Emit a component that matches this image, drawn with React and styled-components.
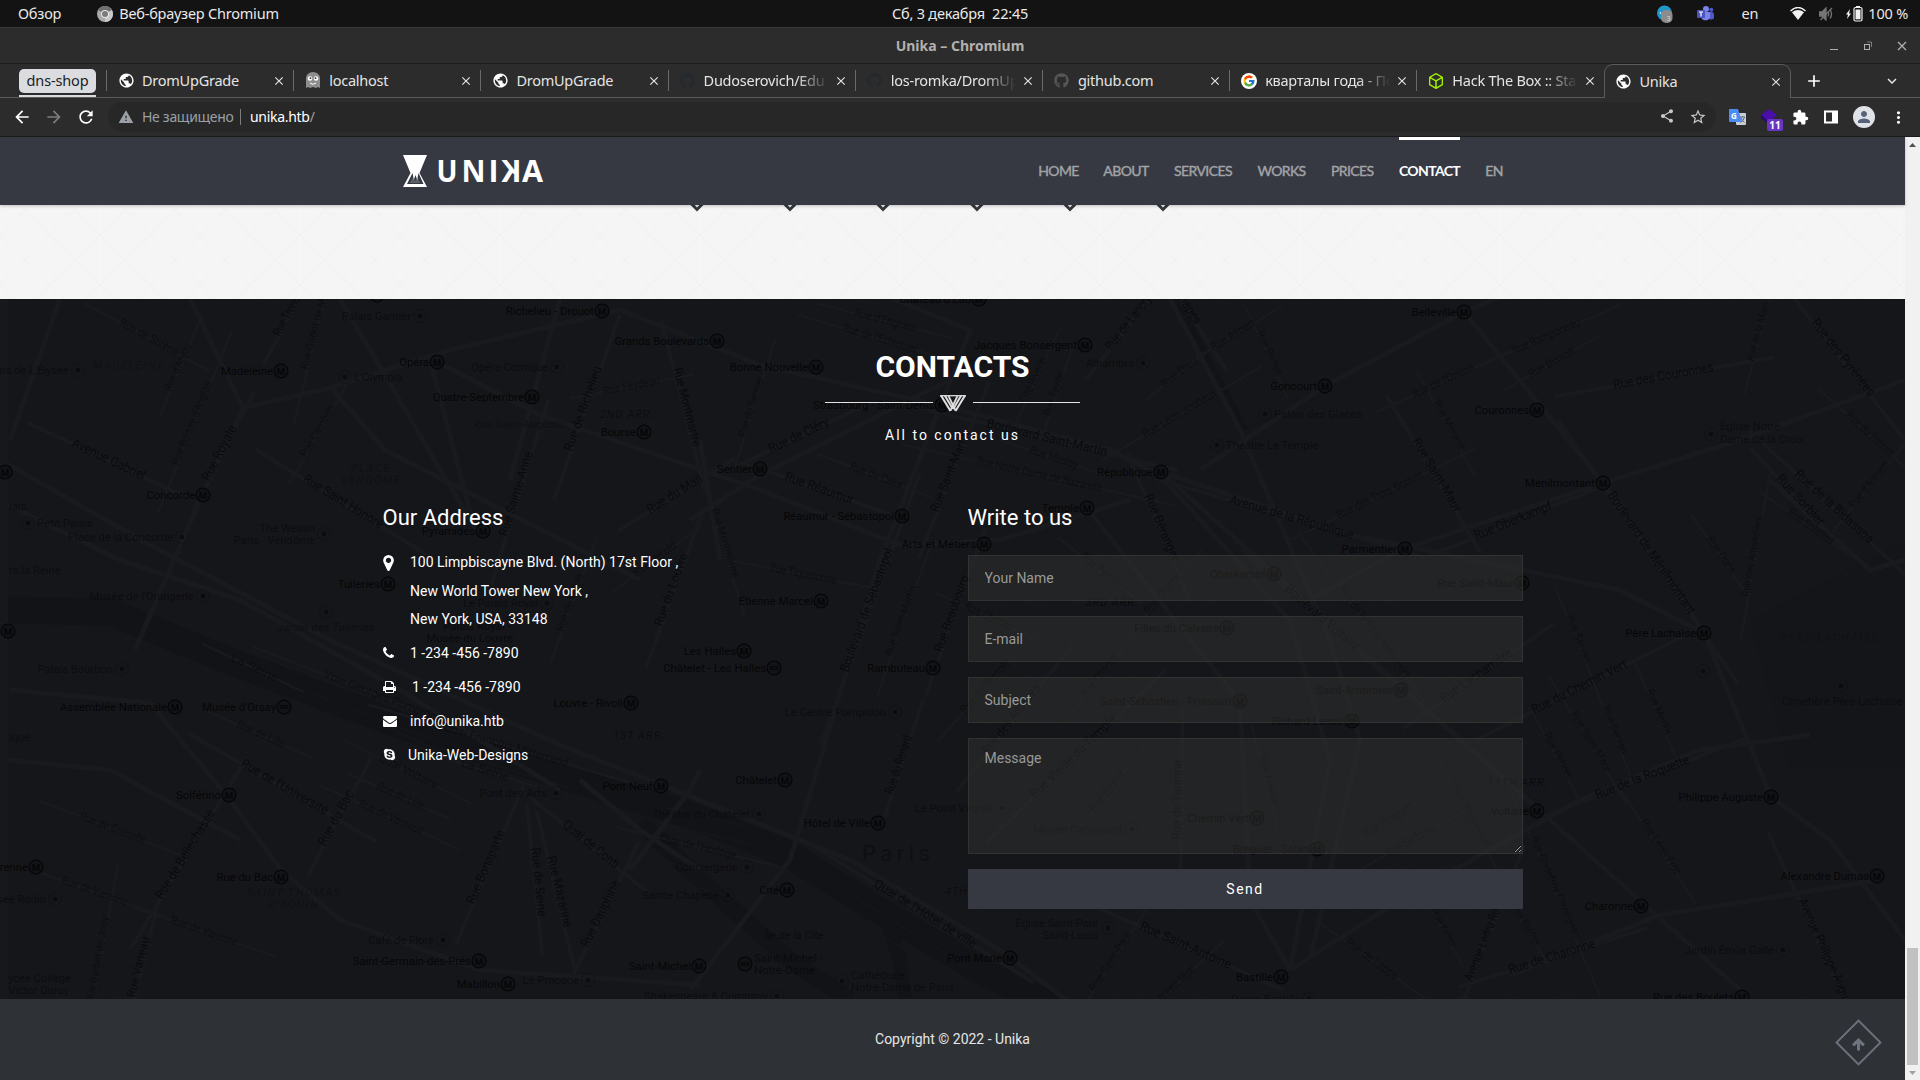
import React from "react";
import styled, { createGlobalStyle, css } from "styled-components";
import {
  MdPublic, MdExtension, MdShare, MdStarBorder, MdWarning, MdArrowBack, MdArrowForward,
  MdRefresh, MdClose, MdAdd, MdMoreVert, MdPerson, MdKeyboardArrowDown,
} from "react-icons/md";
import { FaGithub, FaSkype, FaArrowUp } from "react-icons/fa";
import { FcGoogle } from "react-icons/fc";
import { SiHackthebox } from "react-icons/si";

const UI = `"Noto Sans", "Open Sans", sans-serif`;
const BODY = `Roboto, "Liberation Sans", sans-serif`;

const GlobalStyle = createGlobalStyle`
  *, *::before, *::after { box-sizing: border-box; }
  body { margin: 0; background: #2b2b2b; overflow: hidden; font-family: ${BODY}; }
  svg { display: block; flex: none; }
`;

/* ---------- desktop and browser frame ---------- */

const Screen = styled.div`
  width: 1920px;
  height: 1080px;
  display: flex;
  flex-direction: column;
  overflow: hidden;
`;

const SystemBar = styled.header`
  height: 27px;
  flex: none;
  display: grid;
  grid-template-columns: 1fr auto 1fr;
  align-items: center;
  background: #131313;
  color: #e9e9e9;
  font: 14.5px/27px ${UI};
  letter-spacing: -0.2px;
  white-space: pre;
`;

const SystemLeft = styled.div`
  display: flex;
  align-items: center;
  padding-left: 18px;
`;

const SystemApp = styled.span`
  display: flex;
  align-items: center;
  gap: 6px;
  margin-left: 36px;
`;

const SystemRight = styled.div`
  display: flex;
  align-items: center;
  justify-content: flex-end;
  padding-right: 12px;
`;

const TrayItem = styled.span`
  display: flex;
  align-items: center;
  margin-left: ${(p) => p.$gap}px;
`;

const TitleBar = styled.div`
  height: 37px;
  flex: none;
  display: grid;
  grid-template-columns: 1fr auto 1fr;
  align-items: center;
  background: #2c2c2c;
  border-top: 1px solid #3b3b3b;
  border-bottom: 1px solid #1d1d1d;
  color: #b3b1ae;
  font: bold 14px/35px ${UI};
  letter-spacing: 0;
`;

const WindowButtons = styled.div`
  grid-column: 3;
  display: flex;
  justify-content: flex-end;
  align-items: center;
  gap: 24px;
  padding-right: 13px;
`;

const TabStrip = styled.div`
  height: 34px;
  flex: none;
  display: flex;
  background: #2c2c2c;
  color: #e4e4e4;
  font: 14.5px/28px ${UI};
  letter-spacing: -0.25px;
`;

const StripCell = styled.div`
  display: flex;
  align-items: center;
  border-bottom: 1px solid #5b5b5b;
  ${(p) => p.$grow && css`flex: 1; justify-content: space-between; padding: 0 19px 0 13px;`}
`;

const GroupCell = styled(StripCell)`
  width: 106px;
  padding-left: 19px;
  align-items: flex-start;
`;

const GroupChip = styled.div`
  width: 77px;
  height: 33px;
  padding-top: 5px;
  border-bottom: 2px solid #dadce0;
`;

const ChipLabel = styled.div`
  height: 24px;
  border-radius: 5px;
  background: #dadce0;
  color: #202124;
  text-align: center;
  line-height: 22px;
  letter-spacing: -0.15px;
`;

const Tab = styled(StripCell)`
  width: 187.2px;
  padding: 0 7px 0 0;

  &::before {
    content: "";
    width: 1px;
    height: 21px;
    background: #6a6a6a;
    margin-right: 11px;
  }

  ${(p) =>
    p.$active &&
    css`
      border: 1px solid #5b5b5b;
      border-bottom: 0;
      border-radius: 9px 9px 0 0;
      &::before { background: transparent; margin-right: 10px; }
    `}
`;

const TabIcon = styled.span`
  width: 16px;
  display: flex;
  justify-content: center;
`;

const TabTitle = styled.span`
  flex: 1;
  margin: 0 5px 0 8px;
  padding-bottom: 2px;
  overflow: hidden;
  white-space: nowrap;
  ${(p) =>
    p.$fade &&
    css`
      -webkit-mask-image: linear-gradient(90deg, #000 74%, transparent 100%);
      mask-image: linear-gradient(90deg, #000 74%, transparent 100%);
    `}
`;

const Toolbar = styled.div`
  height: 39px;
  flex: none;
  display: flex;
  align-items: center;
  background: #2c2c2c;
  border-bottom: 1px solid #1b1b1b;
  padding: 0 12px;
  font: 14px/30px ${UI};
  color: #fff;
`;

const NavButtons = styled.div`
  display: flex;
  gap: 12px;
  width: 96px;
`;

const Omnibox = styled.div`
  width: 1608px;
  height: 30px;
  border-radius: 15px;
  background: #272727;
  display: flex;
  align-items: center;
  padding: 0 9px 0 10px;
  letter-spacing: -0.3px;
`;

const Security = styled.span`
  display: flex;
  align-items: center;
  gap: 8px;
  width: 122px;
  color: #9aa0a6;
  white-space: nowrap;
`;

const Separator = styled.span`
  width: 1px;
  height: 16px;
  margin-right: 9px;
  background: #7c7c7c;
`;

const Url = styled.span`
  flex: 1;
  i { color: #9aa0a6; font-style: normal; }
`;

const OmniActions = styled.span`
  display: flex;
  gap: 14px;
  color: #c8c8c8;
`;

const Extensions = styled.div`
  flex: 1;
  display: flex;
  align-items: center;
  justify-content: space-between;
  padding: 0 0 0 13px;
`;

const BadgeIcon = styled.span`
  position: relative;
  width: 18px;
  height: 20px;
`;

const Badge = styled.span`
  position: absolute;
  left: 7px;
  top: 12px;
  width: 16px;
  height: 12px;
  border-radius: 2px;
  background: #6a35c0;
  color: #fff;
  font: bold 10px/12px ${UI};
  text-align: center;
`;

const Avatar = styled.span`
  width: 22px;
  height: 22px;
  border-radius: 50%;
  background: #dfe2e7;
  color: #56617a;
  display: flex;
  align-items: center;
  justify-content: center;
`;

/* ---------- page ---------- */

const Viewport = styled.div`
  flex: 1;
  min-height: 0;
  display: grid;
  grid-template-columns: 1905px 15px;
`;

const Page = styled.main`
  display: flex;
  flex-direction: column;
  min-width: 0;
`;

const ScrollTrack = styled.div`
  background: #f1f1f1;
  display: flex;
  flex-direction: column;
  align-items: center;
  justify-content: space-between;
  padding: 6px 0 5px;
`;

const ScrollThumb = styled.div`
  width: 11px;
  height: 117px;
  margin-top: auto;
  margin-bottom: 6px;
  background: #c1c1c1;
`;

const NavBar = styled.nav`
  height: 68px;
  flex: none;
  display: flex;
  justify-content: space-between;
  padding: 0 402px 0 403px;
  background: #363942;
  box-shadow: 0 1px 3px rgba(0, 0, 0, 0.22);
  z-index: 2;
`;

const Logo = styled.div`
  padding-top: 16px;
`;

const Menu = styled.ul`
  display: flex;
  gap: 25px;
  margin: 0;
  padding: 0;
  list-style: none;
`;

const MenuItem = styled.li`
  width: ${(p) => p.$width}px;
  display: flex;
  justify-content: center;
  border-top: 3px solid ${(p) => (p.$active ? "#fff" : "transparent")};
  color: ${(p) => (p.$active ? "#fff" : "#a2a3a7")};
  font: ${(p) => (p.$active ? 700 : 400)} 14px/62px Lato, sans-serif;
  letter-spacing: ${(p) => (p.$active ? -0.65 : -0.6)}px;
  -webkit-text-stroke: ${(p) => (p.$active ? 0 : 0.4)}px currentColor;
`;

const Stripes = styled.section`
  height: 94px;
  flex: none;
  position: relative;
  background: #f5f5f5;
`;

const ArrowRow = styled.div`
  position: relative;
  display: flex;
  gap: 79.4px;
  padding-left: 689.5px;
`;

const Backdrop = styled.svg`
  position: absolute;
  inset: 0;
`;

const Contacts = styled.section`
  height: 700px;
  flex: none;
  position: relative;
  background: #15161a;
  color: #fff;
`;

const Container = styled.div`
  position: relative;
  width: 1140px;
  margin: 0 auto;
  padding-top: 49px;
`;

const Heading = styled.h2`
  margin: 0;
  text-align: center;
  font: bold 30px/37px ${BODY};
`;

const Divider = styled.div`
  display: flex;
  justify-content: center;
  align-items: center;
  gap: 7px;
  height: 18px;
  margin-top: 9px;
`;

const Rule = styled.span`
  width: 107.5px;
  height: 1px;
  background: #e4e4e4;
  margin-top: -2px;
`;

const Lead = styled.p`
  margin: 13px 0 0;
  text-align: center;
  font: 14px/20px ${BODY};
  letter-spacing: 2px;
`;

const Columns = styled.div`
  display: grid;
  grid-template-columns: 555px 555px;
  gap: 30px;
  margin-top: 58px;
`;

const ColumnTitle = styled.h3`
  margin: 0;
  font: 400 22px/30px ${BODY};
`;

const AddressList = styled.ul`
  list-style: none;
  margin: 15px 0 0;
  padding: 0;
  display: flex;
  flex-direction: column;
  gap: 5.5px;
  font: 14px/28.5px ${BODY};
`;

const AddressItem = styled.li`
  display: grid;
  grid-template-columns: ${(p) => p.$indent}px 1fr;
  svg { margin-top: 7px; }
`;

const Form = styled.form`
  display: flex;
  flex-direction: column;
  gap: 15px;
  margin-top: 22px;
`;

const fieldStyle = css`
  width: 100%;
  margin: 0;
  border: 1px solid rgba(74, 74, 70, 0.38);
  border-radius: 0;
  outline: 0;
  background: rgba(50, 50, 48, 0.5);
  color: #fff;
  font: 14px/20px ${BODY};
  &::placeholder { color: #999; opacity: 1; }
`;

const Field = styled.input`
  ${fieldStyle}
  height: 46px;
  padding: 0 16px;
`;

const MessageField = styled.textarea`
  ${fieldStyle}
  display: block;
  height: 116px;
  padding: 9px 16px;
`;

const SendButton = styled.button`
  height: 40px;
  border: 0;
  padding: 0;
  background: #363942;
  color: #fff;
  font: 14px/40px ${BODY};
  letter-spacing: 1.5px;
`;

const Footer = styled.footer`
  flex: 1;
  display: grid;
  grid-template-columns: 1fr auto 1fr;
  align-items: center;
  background: #2e3135;
  color: #e6e6e6;
  font: 14px/20px ${BODY};
`;

const Copyright = styled.span`
  padding-bottom: 2px;
`;

const ToTop = styled.a`
  grid-column: 3;
  justify-self: end;
  width: 33px;
  height: 33px;
  margin: 6px 30px 0 0;
  border: 2px solid #6b717c;
  transform: rotate(45deg);
  display: flex;
  align-items: center;
  justify-content: center;
  color: #6f7580;
  svg { transform: rotate(-45deg) translateY(2px); stroke: currentColor; stroke-width: 40px; }
`;

/* ---------- map data: page coordinates ---------- */

const METRO = [
  [281, 371, "Madeleine"], [437, 362, "Opéra"], [532, 397, "Quatre-Septembre"], [602, 311, "Richelieu - Drouot"],
  [717, 341, "Grands Boulevards"], [816, 367, "Bonne Nouvelle"], [644, 432, "Bourse"], [760, 469, "Sentier"],
  [902, 516, "Réaumur - Sébastopol"], [483, 531, "Pyramides"], [388, 584, "Tuileries"], [203, 495, "Concorde"],
  [821, 601, "Étienne Marcel"], [744, 651, "Les Halles"], [774, 668, "Châtelet - Les Halles", 1], [933, 668, "Rambuteau"],
  [631, 703, "Louvre - Rivoli"], [785, 780, "Châtelet"], [984, 544, "Arts et Métiers"], [1087, 508, "Temple"],
  [1161, 472, "République"], [1085, 345, "Jacques Bonsergent"], [942, 405, "Strasbourg - Saint-Denis"],
  [979, 299, "Château d'Eau"], [1325, 386, "Goncourt"], [1464, 312, "Belleville"], [1537, 410, "Couronnes"],
  [1603, 483, "Ménilmontant"], [1704, 633, "Père Lachaise"], [1405, 549, "Parmentier"], [1522, 583, "Rue Saint-Maur"],
  [1274, 574, "Oberkampf"], [1227, 628, "Filles du Calvaire"], [1240, 701, "Saint-Sébastien - Froissart"],
  [1401, 690, "Saint-Ambroise"], [1352, 721, "Richard-Lenoir"], [1257, 818, "Chemin Vert"], [1317, 849, "Bréguet - Sabin"],
  [1537, 811, "Voltaire"], [1771, 797, "Philippe Auguste"], [1877, 876, "Alexandre Dumas"], [1641, 906, "Charonne"],
  [1742, 997, "Rue des Boulets"], [1281, 977, "Bastille"], [1010, 958, "Pont Marie"], [878, 823, "Hôtel de Ville"],
  [787, 890, "Cité"], [699, 966, "Saint-Michel"], [508, 984, "Mabillon"], [479, 961, "Saint-Germain-des-Prés"],
  [281, 877, "Rue du Bac"], [229, 795, "Solférino"], [175, 707, "Assemblée Nationale"], [284, 707, "Musée d'Orsay", 1],
  [36, 867, "Varenne"], [661, 786, "Pont Neuf"], [745, 964, "", 1], [5, 472, ""], [8, 631, ""], [377, 295, ""],
];

/* dot position, label, label on the right of the dot */
const PLACES = [
  [78, 370, "Palais de L'Élysée"], [420, 316, "Palais Garnier"], [345, 377, "L'Olympia", 1], [557, 367, "Opéra Comique"],
  [28, 523, "Petit Palais", 1], [182, 537, "Place de la Concorde"], [203, 596, "Musée de l'Orangerie"],
  [547, 603, "Le Palais Royal"], [895, 712, "Le Centre Pompidou"], [1143, 363, "Alhambra"],
  [1265, 414, "Palais des Glaces", 1], [1217, 445, "Théâtre Le Temple", 1], [122, 669, "Palais Bourbon"],
  [556, 793, "Pont des Arts"], [443, 940, "Café de Flore"], [588, 980, "Le Procope"], [55, 899, "Musée Rodin"],
  [759, 814, "Théâtre du Châtelet"], [747, 867, "Conciergerie"], [728, 895, "Sainte Chapelle"],
  [777, 996, "Shakespeare & Company"], [1002, 808, "Le Point Virgule"], [1132, 829, "Musée Carnavalet"],
  [1783, 950, "Jardin Émile Gallé"], [1309, 999, "Opéra Bastille"], [1703, 671, ""], [1841, 686, ""],
  [1711, 434, ""], [1108, 928, ""], [842, 981, ""], [324, 534, ""], [326, 612, ""],
];

/* free text: x, y, label, size, anchor, tone, spacing, italic */
const AREAS = [
  [129, 369, "MADELEINE", 11, "middle", 0.4, 1.6, 1], [371, 472, "PLACE", 11, "middle", 0.45, 1.6, 1],
  [371, 484, "VENDÔME", 11, "middle", 0.45, 1.6, 1], [627, 418, "2ND ARR.", 11, "middle", 0.7, 1, 1],
  [520, 428, "Rue Saint-Augustin", 11, "middle", 0.5, 0, 0], [639, 739, "1ST ARR.", 11, "middle", 0.7, 1, 1],
  [1112, 606, "3RD ARR.", 11, "middle", 0.9, 1, 1], [1518, 786, "11TH ARR.", 11, "middle", 0.8, 1, 1],
  [945, 895, "4TH", 11, "start", 0.7, 1, 1], [294, 896, "SAINT-THOMAS", 11, "middle", 0.4, 1.6, 1],
  [294, 908, "D'AQUIN", 11, "middle", 0.4, 1.6, 1], [1830, 641, "PÈRE-LACHAISE", 11, "middle", 0.4, 1.6, 1],
  [862, 861, "Paris", 22, "start", 0.55, 4.5, 0], [315, 532, "The Westin", 11.2, "end", 0.7, 0, 0],
  [315, 544, "Paris - Vendôme", 11.2, "end", 0.7, 0, 0], [326, 631, "Jardin des Tuileries", 11.2, "middle", 0.6, 0.2, 1],
  [477, 630, "Palais Royal -", 11.4, "middle", 0.9, 0, 0], [513, 642, "Musée du Louvre", 11.4, "end", 0.9, 0, 0],
  [1720, 430, "Église Notre", 11.2, "start", 0.7, 0, 0], [1720, 443, "Dame de la Croix", 11.2, "start", 0.7, 0, 0],
  [1782, 705, "Cimetière Père-Lachaise", 11.2, "start", 0.7, 0, 0], [1098, 927, "Église Saint-Paul", 11.2, "end", 0.7, 0, 0],
  [1098, 939, "Saint-Louis", 11.2, "end", 0.7, 0, 0], [754, 962, "Saint-Michel -", 11.4, "start", 0.9, 0, 0],
  [754, 974, "Notre-Dame", 11.4, "start", 0.9, 0, 0], [851, 979, "Cathédrale", 11.2, "start", 0.7, 0, 0],
  [851, 991, "Notre-Dame de Paris", 11.2, "start", 0.7, 0, 0], [794, 939, "Île de la Cité", 11.2, "middle", 0.8, 0, 1],
  [9, 574, "rs la Reine", 11.2, "start", 0.7, 0, 0], [9, 510, "lais", 11.2, "start", 0.7, 0, 0],
  [9, 741, "ique", 11.2, "start", 0.6, 0, 0], [8, 982, "ycée Collège", 11.2, "start", 0.7, 0, 0],
  [8, 994, "Victor Duruy", 11.2, "start", 0.7, 0, 0],
  [937, 364, "Le Splendid", 11.2, "start", 0.4, 0, 0],
];

/* street name between two points; the last value marks a wide road */
const STREETS = [
  ["Rue de Surène", 119, 325, 176, 356], ["Rue d'Anjou", 171, 392, 191, 345], ["Rue Boissy d'Anglas", 178, 466, 212, 383],
  ["Rue Royale", 209, 482, 237, 428, 1], ["Rue Godot de Mauroy", 308, 370, 332, 275], ["Rue Tronchet", 280, 337, 307, 287, 1],
  ["Avenue Gabriel", 71, 446, 143, 480, 1], ["Rue Cambon", 306, 458, 335, 408], ["Rue Saint Honoré", 302, 481, 380, 529, 1],
  ["Rue Sainte-Anne", 507, 537, 533, 453, 1], ["Rue de Richelieu", 572, 452, 602, 368, 1], ["Rue Montmartre", 673, 369, 693, 447, 1],
  ["Rue Feydeau", 604, 395, 660, 384], ["Rue du Sentier", 745, 438, 764, 378], ["Rue de Cléry", 771, 453, 830, 425, 1],
  ["Rue du Mail", 650, 514, 703, 481, 1], ["Rue Réaumur", 784, 480, 852, 504, 1], ["Rue du Caire", 849, 469, 901, 489],
  ["Rue Saint-Martin", 938, 513, 970, 433, 1], ["Rue Montmartre", 711, 510, 732, 578], ["Rue Tiquetonne", 769, 571, 836, 584],
  ["Rue du Louvre", 662, 627, 688, 555, 1], ["Rue de Valois", 563, 632, 584, 575], ["Rue Hérold", 637, 577, 677, 547],
  ["Boulevard de Sébastopol", 848, 673, 893, 550, 1], ["Rue Saint-Martin", 892, 657, 917, 587], ["Rue Beaubourg", 942, 653, 969, 577, 1],
  ["Rue du Renard", 893, 795, 912, 737, 1], ["Voie Georges Pompidou", 323, 677, 441, 723], ["Quai François Mitterrand", 443, 730, 567, 767],
  ["La Seine", 230, 660, 276, 682], ["La Seine", 460, 766, 508, 781], ["Quai Voltaire", 378, 760, 436, 789],
  ["Rue de Lille", 236, 727, 283, 748], ["Rue de Lille", 376, 789, 423, 810], ["Rue de Verneuil", 358, 806, 421, 835],
  ["Rue de l'Université", 240, 766, 325, 815, 1], ["Rue du Bac", 325, 847, 354, 793, 1], ["Rue de Grenelle", 79, 819, 144, 844],
  ["Rue de Bellechasse", 162, 900, 215, 813, 1], ["Rue de Varenne", 61, 883, 126, 906], ["Rue de Varenne", 170, 923, 236, 946],
  ["Rue Vaneau", 135, 998, 150, 938, 1], ["Rue Barbet de Jouy", 94, 1003, 109, 917], ["Rue Bonaparte", 474, 905, 505, 832, 1],
  ["Rue de Seine", 531, 848, 538, 917, 1], ["Rue Mazarine", 547, 857, 564, 928, 1], ["Rue Dauphine", 588, 948, 620, 883, 1],
  ["Quai de Conti", 562, 826, 615, 869, 1], ["Quai de l'Horloge", 660, 841, 735, 859], ["Quai de l'Hôtel de ville", 873, 886, 973, 948, 1],
  ["Rue Saint-Paul", 1095, 992, 1132, 935], ["Rue Saint-Antoine", 1139, 929, 1229, 969, 1], ["Rue du Petit Musc", 1150, 1013, 1196, 970],
  ["Rue de Lappe", 1345, 944, 1395, 980], ["Rue Keller", 1430, 911, 1451, 948], ["Avenue Ledru Rollin", 1472, 982, 1505, 898, 1],
  ["Rue Basfroi", 1511, 908, 1535, 946], ["Rue Godefroy Cavaignac", 1530, 838, 1574, 939], ["Rue de Charonne", 1510, 974, 1596, 947, 1],
  ["Rue Pétion", 1543, 735, 1566, 778], ["Rue Saint-Maur", 1570, 714, 1606, 773], ["Rue Servan", 1602, 708, 1621, 755],
  ["Rue Merlin", 1646, 691, 1665, 735], ["Rue du Chemin Vert", 1534, 714, 1628, 667, 1], ["Rue de la Roquette", 1597, 799, 1690, 763, 1],
  ["Rue Léon Frot", 1640, 822, 1675, 875], ["Avenue Philippe-Auguste", 1798, 901, 1849, 1014, 1], ["Rue Lacharrière", 1444, 703, 1513, 655, 1],
  ["Rue Popincourt", 1452, 788, 1484, 848], ["Rue Sedaine", 1388, 857, 1436, 830], ["Rue Bréguet", 1366, 838, 1414, 808],
  ["Rue Amelot", 1259, 757, 1271, 806], ["Rue de Turenne", 1181, 840, 1182, 760, 1], ["Rue Elzévir", 1094, 813, 1126, 773],
  ["Rue Vieille du Temple", 1035, 799, 1117, 720, 1], ["Rue des Archives", 988, 755, 1041, 688, 1], ["Rue du Temple", 965, 714, 1011, 663],
  ["Rue Charlot", 1086, 698, 1119, 658], ["Rue Charlot", 1149, 615, 1182, 576], ["Rue Perrée", 1080, 558, 1118, 588],
  ["Rue Chapon", 964, 609, 1012, 631], ["Rue Béranger", 1144, 496, 1172, 562, 1], ["Boulevard Voltaire", 1284, 590, 1355, 652, 1],
  ["Rue de la Folie Méricourt", 1338, 589, 1405, 679], ["Avenue de la République", 1229, 503, 1352, 539, 1],
  ["Rue des Trois Bornes", 1339, 519, 1424, 477], ["Rue Oberkampf", 1476, 540, 1553, 509, 1], ["Rue Saint-Maur", 1412, 441, 1455, 513, 1],
  ["Rue Morand", 1433, 403, 1459, 450], ["Rue de l'Orillon", 1414, 398, 1475, 370], ["Rue Ramponeau", 1514, 354, 1581, 325],
  ["Rue Bisson", 1531, 378, 1575, 353], ["Rue des Couronnes", 1614, 389, 1714, 371, 1], ["Rue des Pyrénées", 1811, 323, 1869, 397, 1],
  ["Rue de la Mare", 1754, 362, 1770, 303], ["Rue du Retrait", 1845, 416, 1890, 457], ["Rue d'Annam", 1854, 509, 1890, 465],
  ["Rue Sorbier", 1776, 479, 1819, 526, 1], ["Rue de la Bidassoa", 1794, 475, 1869, 544, 1], ["Rue Soleillet", 1787, 514, 1831, 545],
  ["Boulevard de Ménilmontant", 1607, 495, 1689, 615, 1], ["Rue Duris", 1706, 539, 1731, 575], ["Rue des Amandiers", 1749, 597, 1763, 517],
  ["Rue Servan", 1566, 617, 1585, 664], ["Rue de Lancry", 1111, 351, 1152, 299, 1], ["Rue Alibert", 1213, 351, 1256, 325],
  ["Rue Bichat", 1256, 333, 1276, 376], ["Rue Dieu", 1165, 388, 1198, 362], ["Rue Léon Jouhaux", 1145, 438, 1218, 395],
  ["Boulevard Saint-Martin", 986, 427, 1106, 456, 1], ["Rue Meslay", 1029, 453, 1077, 469], ["Rue Notre Dame de Nazareth", 976, 464, 1101, 492],
  ["Cité Riverin", 1026, 404, 1047, 359], ["Rue Taylor", 1050, 417, 1065, 373], ["Rue d'Enghien", 854, 316, 916, 332],
  ["Rue de l'Échiquier", 842, 331, 916, 353], ["Quai de Jemmapes", 1141, 242, 1195, 325, 1],
];

const MAJOR = [
  "0,460 150,545 330,640 560,745 700,800 850,860 1000,950 1080,1010",
  "8,505 120,560 240,600 400,690 560,790",
  "190,299 243,408 330,388 450,350 620,310 760,365 960,410 1110,450 1160,475 1290,620 1330,760 1290,970",
  "243,408 200,500 135,650",
  "10,690 150,703 230,800 281,870 340,920 480,970 700,985",
  "8,760 110,770 240,840",
  "430,360 475,530", "437,362 540,415 760,490 900,545 1000,540 1130,500",
  "690,520 760,475 960,375", "700,440 720,560", "893,299 970,330 880,560 790,860 690,990",
  "1161,472 1350,535 1620,590 1704,633 1771,797 1830,840 1920,960",
  "1170,299 1240,430 1330,640 1360,740 1310,960", "1161,472 1540,811 1740,990",
  "1200,470 1325,386 1464,312 1540,280", "1464,312 1603,483 1704,633",
  "1310,600 1400,550 1603,483 1740,440 1850,400 1905,380",
  "1290,970 1400,900 1580,800 1700,750 1810,735", "1510,975 1660,915 1880,880", "1770,480 1870,570 1905,560",
  "1087,508 1190,640 1240,701 1250,900 1290,970", "580,780 640,830 700,870", "630,870 690,790 700,770",
  "340,299 470,520", "60,299 10,440", "333,390 385,450 640,580", "560,299 510,480",
];

const RIVER = [
  ["0,610 110,612 240,665 400,725 560,775 690,815 790,855 870,905 980,970 1060,1010", 27],
  ["640,822 700,880 790,960 850,1000", 17],
  ["880,900 900,960 905,1000", 14],
];

/* thin side streets running beside every named street */
function SideStreets() {
  const out = [];
  STREETS.forEach(([, x1, y1, x2, y2], i) => {
    const len = Math.hypot(x2 - x1, y2 - y1);
    const ux = (x2 - x1) / len;
    const uy = (y2 - y1) / len;
    [-34, -18, 19, 37].forEach((d, k) => {
      const ext = ((i * 7 + k * 13) % 30) - 6;
      out.push(
        <line
          key={`${i}-${k}`}
          x1={x1 - uy * d - ux * ext}
          y1={y1 + ux * d - uy * ext}
          x2={x2 - uy * d + ux * ext}
          y2={y2 + ux * d + uy * ext}
        />
      );
    });
  });
  return <g stroke="#18191d" strokeWidth="1.5" opacity="0.6">{out}</g>;
}

function StreetMap() {
  return (
    <Backdrop width="1905" height="700" viewBox="0 299 1905 700" aria-hidden="true">
      <g fill="none" stroke="#121317" strokeLinejoin="round">
        {RIVER.map(([points, width]) => (
          <polyline key={points} points={points} strokeWidth={width} />
        ))}
        <path d="M1175 299 L1245 430" strokeWidth="8" />
      </g>
      <path d="M1750 620 L1905 540 L1905 770 L1790 770 Z" fill="#141519" />
      <SideStreets />
      <g stroke="#181a1e" fill="none">
        {STREETS.map(([name, x1, y1, x2, y2, wide], i) => {
          const ux = (x2 - x1) * 0.6;
          const uy = (y2 - y1) * 0.6;
          return (
            <line key={name + i} x1={x1 - ux} y1={y1 - uy - 3} x2={x2 + ux} y2={y2 + uy - 3} strokeWidth={wide ? 4 : 2.5} />
          );
        })}
        {MAJOR.map((points) => (
          <polyline key={points} points={points} strokeWidth="5" strokeLinejoin="round" />
        ))}
      </g>
      <rect x="0" y="299" width="8" height="700" fill="#17181c" />
      <g fontFamily={BODY}>
        {STREETS.map(([name, x1, y1, x2, y2, wide], i) => (
          <text
            key={name + i}
            fontSize={wide ? 13 : 11.5}
            fill="#08090b"
            fillOpacity={wide ? 0.9 : 0.62}
            textLength={Math.hypot(x2 - x1, y2 - y1)}
            lengthAdjust="spacingAndGlyphs"
            transform={`translate(${x1} ${y1}) rotate(${(Math.atan2(y2 - y1, x2 - x1) * 180) / Math.PI})`}
          >
            {name}
          </text>
        ))}
        {AREAS.map(([x, y, text, size, anchor, tone, spacing, italic]) => (
          <text
            key={text + y}
            x={x}
            y={y}
            fontSize={size}
            textAnchor={anchor}
            letterSpacing={spacing}
            fontStyle={italic ? "italic" : "normal"}
            fill="#08090b"
            fillOpacity={tone}
          >
            {text}
          </text>
        ))}
        {PLACES.map(([x, y, text, right]) => (
          <g key={`${x}-${y}`} fill="#08090b" fillOpacity="0.72">
            <circle cx={x} cy={y} r="6.5" fill="none" stroke="#0c0d10" strokeOpacity="0.5" />
            <rect x={x - 2} y={y - 2} width="4" height="4" />
            {text && (
              <text x={right ? x + 9 : x - 9} y={y + 4} fontSize="11.2" textAnchor={right ? "start" : "end"}>
                {text}
              </text>
            )}
          </g>
        ))}
        {METRO.map(([x, y, text, rer]) => (
          <g key={`${x}-${y}`} fill="#050608">
            <circle cx={x} cy={y} r="6.9" fill="#121317" stroke="#050608" strokeWidth="1.3" />
            <text x={x} y={y + (rer ? 2 : 3.5)} fontSize={rer ? 5 : 9.5} fontWeight="bold" textAnchor="middle">
              {rer ? "RER" : "M"}
            </text>
            {text && <text x={x - 8} y={y + 4} fontSize="11.3" textAnchor="end">{text}</text>}
          </g>
        ))}
      </g>
    </Backdrop>
  );
}

function StripePattern() {
  return (
    <Backdrop width="1905" height="94" aria-hidden="true">
      <defs>
        <pattern id="lattice" width="50" height="50" y="30" patternUnits="userSpaceOnUse">
          <path d="M0 0V50M50 0V50" stroke="#f7f7f7" strokeWidth="1" />
          <path d="M0 0L50 50M50 0L0 50" stroke="#efefef" strokeWidth="0.9" />
        </pattern>
      </defs>
      <rect width="1905" height="94" fill="url(#lattice)" />
    </Backdrop>
  );
}

/* ---------- drawings ---------- */

const PIN = "M1152 640q0-106-75-181t-181-75-181 75-75 181 75 181 181 75 181-75 75-181zm256 0q0 109-33 179l-364 774q-16 33-47.5 52t-67.5 19-67.5-19-46.5-52l-365-774q-33-70-33-179 0-212 150-362t362-150 362 150 150 362z";
const PHONE = "M1600 1240q0 27-10 70.5t-21 68.5q-21 50-122 106-94 51-186 51-27 0-53-3.5t-57.5-12.5-47-14.5-55.5-20.5-49-18q-98-35-175-83-127-79-264-216t-216-264q-48-77-83-175-3-9-18-49t-20.5-55.5-14.5-47-12.5-57.5-3.5-53q0-92 51-186 56-101 106-122 25-11 68.5-21t70.5-10q14 0 21 3 18 6 53 76 11 19 30 54t35 63.5 31 53.5q3 4 17.5 25t21.5 35.5 7 28.5q0 20-28.5 50t-62 55-62 53-28.5 46q0 9 5 22.5t8.5 20.5 14 24 11.5 19q76 137 174 235t235 174q2 1 19 11.5t24 14 20.5 8.5 22.5 5q18 0 46-28.5t53-62 55-62 50-28.5q14 0 28.5 7t35.5 21.5 25 17.5q25 15 53.5 31t63.5 35 54 30q70 35 76 53 3 7 3 21z";
const PRINT = "M448 1536h896v-256h-896v256zm0-640h896v-384h-160q-40 0-68-28t-28-68v-160h-640v640zm1152 64q0-26-19-45t-45-19-45 19-19 45 19 45 45 19 45-19 19-45zm128 0v416q0 13-9.5 22.5t-22.5 9.5h-224v160q0 40-28 68t-68 28h-960q-40 0-68-28t-28-68v-160h-224q-13 0-22.5-9.5t-9.5-22.5v-416q0-79 56.5-135.5t135.5-56.5h64v-544q0-40 28-68t68-28h672q40 0 88 20t76 48l152 152q28 28 48 76t20 88v256h64q79 0 135.5 56.5t56.5 135.5z";
const MAIL = "M1792 710v794q0 66-47 113t-113 47h-1472q-66 0-113-47t-47-113v-794q44 49 101 87 362 246 497 345 57 42 92.5 65.5t94.5 48 110 24.5h2q51 0 110-24.5t94.5-48 92.5-65.5q170-123 498-345 57-39 100-87zm0-294q0 79-49 151t-122 123q-376 261-468 325-10 7-42.5 31t-54 38.5-52 32.5-57.5 27-50 9h-2q-23 0-50-9t-57.5-27-52-32.5-54-38.5-42.5-31q-91-64-262-182.5t-205-142.5q-62-42-117-115.5t-55-136.5q0-78 41.5-130t118.5-52h1472q65 0 112.5 47t47.5 113z";

const Glyph = ({ d, box, w, h }) => (
  <svg width={w} height={h} viewBox={box} fill="#fff"><path d={d} /></svg>
);

const ChromiumIcon = () => (
  <svg width="16" height="16" viewBox="0 0 16 16">
    <circle cx="8" cy="8" r="8" fill="#a9a9a9" />
    <path d="M8 8L1.1 4A8 8 0 0 1 14.9 4z" fill="#6f6f6f" />
    <path d="M8 8L14.9 4A8 8 0 0 1 8 16z" fill="#c9c9c9" />
    <circle cx="8" cy="8" r="4" fill="#e6e6e6" />
    <circle cx="8" cy="8" r="3" fill="#7b7b7b" />
  </svg>
);

const GhostIcon = () => (
  <svg width="16" height="17" viewBox="0 0 16 17">
    <path d="M1 16V6a7 6 0 0 1 14 0v10l-2-1-2 1-3-1-3 1-2-1z" fill="#8e8e8e" />
    <circle cx="5" cy="6.5" r="2.3" fill="#fff" />
    <circle cx="11" cy="6.5" r="2.3" fill="#fff" />
    <circle cx="5.5" cy="6.2" r="0.9" fill="#333" />
    <circle cx="10.5" cy="6.2" r="0.9" fill="#333" />
    <path d="M5 11q3 2.6 6 0" stroke="#fff" fill="none" />
  </svg>
);

const GoogleIcon = () => (
  <svg width="16" height="16" viewBox="0 0 16 16">
    <circle cx="8" cy="8" r="8" fill="#fff" />
    <FcGoogle x="1.5" y="1.5" size={13} />
  </svg>
);

const ChatIcon = () => (
  <svg width="16" height="18" viewBox="0 0 16 18">
    <circle cx="7.5" cy="8" r="7.5" fill="#2196c9" />
    <rect x="4" y="5" width="11.5" height="13" rx="5" fill="#8c8c8c" />
    <circle cx="3.5" cy="8" r="0.8" fill="#fff" />
    <text x="11.5" y="16" fontSize="7" fontFamily={UI} fill="#ddd" textAnchor="middle">3</text>
  </svg>
);

const TeamsIcon = () => (
  <svg width="17" height="16" viewBox="0 0 17 16">
    <circle cx="9" cy="3" r="3" fill="#7b83eb" />
    <circle cx="14.3" cy="3.8" r="2" fill="#5059c9" />
    <rect x="11" y="6" width="6" height="7.5" rx="2.5" fill="#5059c9" />
    <path d="M4 6h9v5a4.7 4.7 0 0 1-9 0z" fill="#7b83eb" />
    <rect x="0" y="4" width="8" height="8" rx="1" fill="#4b53bc" />
    <path d="M2 6h4M4 6v4.5" stroke="#fff" strokeWidth="1.2" />
  </svg>
);

const WifiIcon = () => (
  <svg width="16" height="13" viewBox="0 0 16 13">
    <path d="M0.5 4Q8-3 15.5 4" stroke="#f2f2f2" strokeWidth="1.4" fill="none" />
    <path d="M2 5.3Q8 0.6 14 5.3L8 13z" fill="#f2f2f2" />
  </svg>
);

const MuteIcon = () => (
  <svg width="15" height="14" viewBox="0 0 15 14" fill="none" stroke="#757575" strokeWidth="1.3">
    <path d="M0.5 5h2.5l4-4v12l-4-4h-2.5z" fill="#757575" />
    <path d="M9 4.5q1.6 2.5 0 5M11 2.5q3 4.5 0 9M1.5 13L13 1" />
  </svg>
);

const BatteryIcon = () => (
  <svg width="17" height="16" viewBox="0 0 17 16">
    <path d="M4 3L0 8.5h2L1 13l4-5.500h-2z" fill="#f2f2f2" />
    <rect x="8" y="1.5" width="8" height="13.500" rx="1.5" fill="none" stroke="#f2f2f2" strokeWidth="1.2" />
    <rect x="10" y="0" width="4" height="2" fill="#f2f2f2" />
    <rect x="9.500" y="3.500" width="5" height="9.800" fill="#f2f2f2" />
  </svg>
);

const LogoMark = () => (
  <svg width="142" height="36" viewBox="403 153 142 36" fill="#fff">
    <path d="M403 155h24l-7.500 18 7.500 14h-24l7.500-14z" />
    <path d="M407 184l5.500-11 1.300 7 1.700-5 1.700 5 1.300-7 5 11z" fill="#363942" />
    <path d="M409.500 183l3.300-5 2.200 3 2.200-3 3.300 5z" fill="#fff" opacity="0.2" />
    <g fontFamily={`"Open Sans", sans-serif`} fontWeight="bold" fontSize="30">
      <text x="436.500" y="182" textLength="21" lengthAdjust="spacingAndGlyphs">U</text>
      <text x="461.500" y="182" textLength="24" lengthAdjust="spacingAndGlyphs">N</text>
      <text x="488.500" y="182" textLength="10" lengthAdjust="spacingAndGlyphs">I</text>
      <text transform="translate(521.500 182) scale(-1 1)" textLength="20" lengthAdjust="spacingAndGlyphs">K</text>
      <text x="522" y="182" textLength="21" lengthAdjust="spacingAndGlyphs">A</text>
    </g>
  </svg>
);

const DoubleV = () => (
  <svg width="26" height="17" viewBox="0 0 26 17" fill="none" stroke="#dedede">
    <path d="M1 0.500L10.500 16M4.800 0.500L12.800 14M25 0.500L15.500 16M21.200 0.500L13.200 14" strokeWidth="2.100" />
    <path d="M8.500 1l7 14.500M17.500 1l-7 14.500" strokeWidth="1.800" />
    <path d="M0 0.700h26" strokeWidth="1.300" />
  </svg>
);

const Chevron = () => (
  <svg width="14" height="7" viewBox="0 0 14 7">
    <path d="M0.500 0L7 6.500 13.500 0z" fill="#34363f" />
    <path d="M4.600 0h4.800L7 2.400z" fill="#f5f5f5" />
  </svg>
);

const TABS = [
  { title: "DromUpGrade", icon: <MdPublic size={17} color="#fff" /> },
  { title: "localhost", icon: <GhostIcon /> },
  { title: "DromUpGrade", icon: <MdPublic size={17} color="#fff" /> },
  { title: "Dudoserovich/Edu", icon: <FaGithub size={15} color="#24292e" />, fade: true },
  { title: "los-romka/DromUp", icon: <FaGithub size={15} color="#24292e" />, fade: true },
  { title: "github.com", icon: <FaGithub size={15} color="#565656" /> },
  { title: "кварталы года - По", icon: <GoogleIcon />, fade: true },
  { title: "Hack The Box :: Star", icon: <SiHackthebox size={16} color="#9fef00" />, fade: true },
  { title: "Unika", icon: <MdPublic size={17} color="#fff" />, active: true },
];

const MENU = [
  ["HOME", 40], ["ABOUT", 45], ["SERVICES", 59], ["WORKS", 48], ["PRICES", 43.5], ["CONTACT", 61], ["EN", 18],
];

export default function App() {
  return (
    <Screen>
      <GlobalStyle />
      <SystemBar>
        <SystemLeft>
          <span>Обзор</span>
          <SystemApp><ChromiumIcon />Веб-браузер Chromium</SystemApp>
        </SystemLeft>
        <span>{"Сб, 3 декабря  22:45"}</span>
        <SystemRight>
          <TrayItem $gap={0}><ChatIcon /></TrayItem>
          <TrayItem $gap={24}><TeamsIcon /></TrayItem>
          <TrayItem $gap={28}>en</TrayItem>
          <TrayItem $gap={32}><WifiIcon /></TrayItem>
          <TrayItem $gap={13}><MuteIcon /></TrayItem>
          <TrayItem $gap={12}><BatteryIcon /></TrayItem>
          <TrayItem $gap={5}>100 %</TrayItem>
        </SystemRight>
      </SystemBar>

      <TitleBar>
        <span />
        <span>Unika – Chromium</span>
        <WindowButtons>
          <svg width="10" height="10"><path d="M1 8.500h8" stroke="#b0b0b0" /></svg>
          <svg width="10" height="10" fill="none" stroke="#b0b0b0">
            <rect x="1.500" y="3.500" width="5" height="5" />
            <path d="M4 1h4.500v5" strokeOpacity="0.6" />
          </svg>
          <svg width="10" height="10"><path d="M1 1l8 8M9 1l-8 8" stroke="#b0b0b0" strokeWidth="1.300" /></svg>
        </WindowButtons>
      </TitleBar>

      <TabStrip>
        <GroupCell><GroupChip><ChipLabel>dns-shop</ChipLabel></GroupChip></GroupCell>
        {TABS.map((tab, i) => (
          <Tab key={i} $active={tab.active}>
            <TabIcon>{tab.icon}</TabIcon>
            <TabTitle $fade={tab.fade}>{tab.title}</TabTitle>
            <MdClose size={14} />
          </Tab>
        ))}
        <StripCell $grow>
          <MdAdd size={20} color="#fff" />
          <MdKeyboardArrowDown size={18} />
        </StripCell>
      </TabStrip>

      <Toolbar>
        <NavButtons>
          <MdArrowBack size={20} />
          <MdArrowForward size={20} color="#7d7d7d" />
          <MdRefresh size={20} />
        </NavButtons>
        <Omnibox>
          <Security><MdWarning size={16} />Не защищено</Security>
          <Separator />
          <Url>unika.htb<i>/</i></Url>
          <OmniActions><MdShare size={16} /><MdStarBorder size={18} /></OmniActions>
        </Omnibox>
        <Extensions>
          <svg width="17" height="17" viewBox="0 0 17 17">
            <rect x="7" y="4" width="10" height="12" rx="1" fill="#c9ced4" />
            <path d="M0 0h9l4 13H1a1 1 0 0 1-1-1z" fill="#4b8bf4" />
            <text x="5" y="9.500" fontSize="8" fontWeight="bold" fontFamily={UI} fill="#fff" textAnchor="middle">G</text>
            <path d="M11 8h5M13.500 7v1M15.500 8q-1 4-4 5.500M12 9q1.500 3 3.500 4.500" stroke="#5c6b7a" fill="none" />
          </svg>
          <BadgeIcon>
            <svg width="18" height="20"><path d="M1 8l8-6 8 6-8 7z" fill="#4a0fa8" /><path d="M1 8v3l6 5 2-1z" fill="#2a0870" /></svg>
            <Badge>11</Badge>
          </BadgeIcon>
          <MdExtension size={17} />
          <svg width="16" height="16"><path d="M2 2.500h12v11H2z" fill="none" stroke="#fff" strokeWidth="2" /><path d="M9 2h5v12H9z" fill="#fff" /></svg>
          <Avatar><MdPerson size={18} /></Avatar>
          <MdMoreVert size={19} />
        </Extensions>
      </Toolbar>

      <Viewport>
        <Page>
          <NavBar>
            <Logo><LogoMark /></Logo>
            <Menu>
              {MENU.map(([name, width]) => (
                <MenuItem key={name} $width={width} $active={name === "CONTACT"}>{name}</MenuItem>
              ))}
            </Menu>
          </NavBar>

          <Stripes>
            <StripePattern />
            <ArrowRow>{[0, 1, 2, 3, 4, 5].map((n) => <Chevron key={n} />)}</ArrowRow>
          </Stripes>

          <Contacts>
            <StreetMap />
            <Container>
              <Heading>CONTACTS</Heading>
              <Divider><Rule /><DoubleV /><Rule /></Divider>
              <Lead>All to contact us</Lead>
              <Columns>
                <div>
                  <ColumnTitle>Our Address</ColumnTitle>
                  <AddressList>
                    <AddressItem $indent={27.5}>
                      <Glyph d={PIN} box="384 128 1024 1536" w={11} h={16} />
                      <span>100 Limpbiscayne Blvd. (North) 17st Floor ,<br />New World Tower New York ,<br />New York, USA, 33148</span>
                    </AddressItem>
                    <AddressItem $indent={27.5}>
                      <Glyph d={PHONE} box="192 128 1408 1536" w={11} h={14} /><span>1 -234 -456 -7890</span>
                    </AddressItem>
                    <AddressItem $indent={29.5}>
                      <Glyph d={PRINT} box="64 128 1664 1536" w={13} h={14} /><span>1 -234 -456 -7890</span>
                    </AddressItem>
                    <AddressItem $indent={27.5}>
                      <Glyph d={MAIL} box="0 128 1792 1536" w={14} h={14} /><span>info@unika.htb</span>
                    </AddressItem>
                    <AddressItem $indent={25.5}>
                      <FaSkype size={13} /><span>Unika-Web-Designs</span>
                    </AddressItem>
                  </AddressList>
                </div>
                <div>
                  <ColumnTitle>Write to us</ColumnTitle>
                  <Form>
                    <Field placeholder="Your Name" />
                    <Field placeholder="E-mail" />
                    <Field placeholder="Subject" />
                    <MessageField placeholder="Message" />
                    <SendButton type="button">Send</SendButton>
                  </Form>
                </div>
              </Columns>
            </Container>
          </Contacts>

          <Footer>
            <span />
            <Copyright>Copyright © 2022 - Unika</Copyright>
            <ToTop><FaArrowUp size={13} /></ToTop>
          </Footer>
        </Page>
        <ScrollTrack>
          <svg width="7" height="4"><path d="M0 4l3.500-4L7 4z" fill="#505050" /></svg>
          <ScrollThumb />
          <svg width="7" height="4"><path d="M0 0h7L3.500 4z" fill="#a0a0a0" /></svg>
        </ScrollTrack>
      </Viewport>
    </Screen>
  );
}
